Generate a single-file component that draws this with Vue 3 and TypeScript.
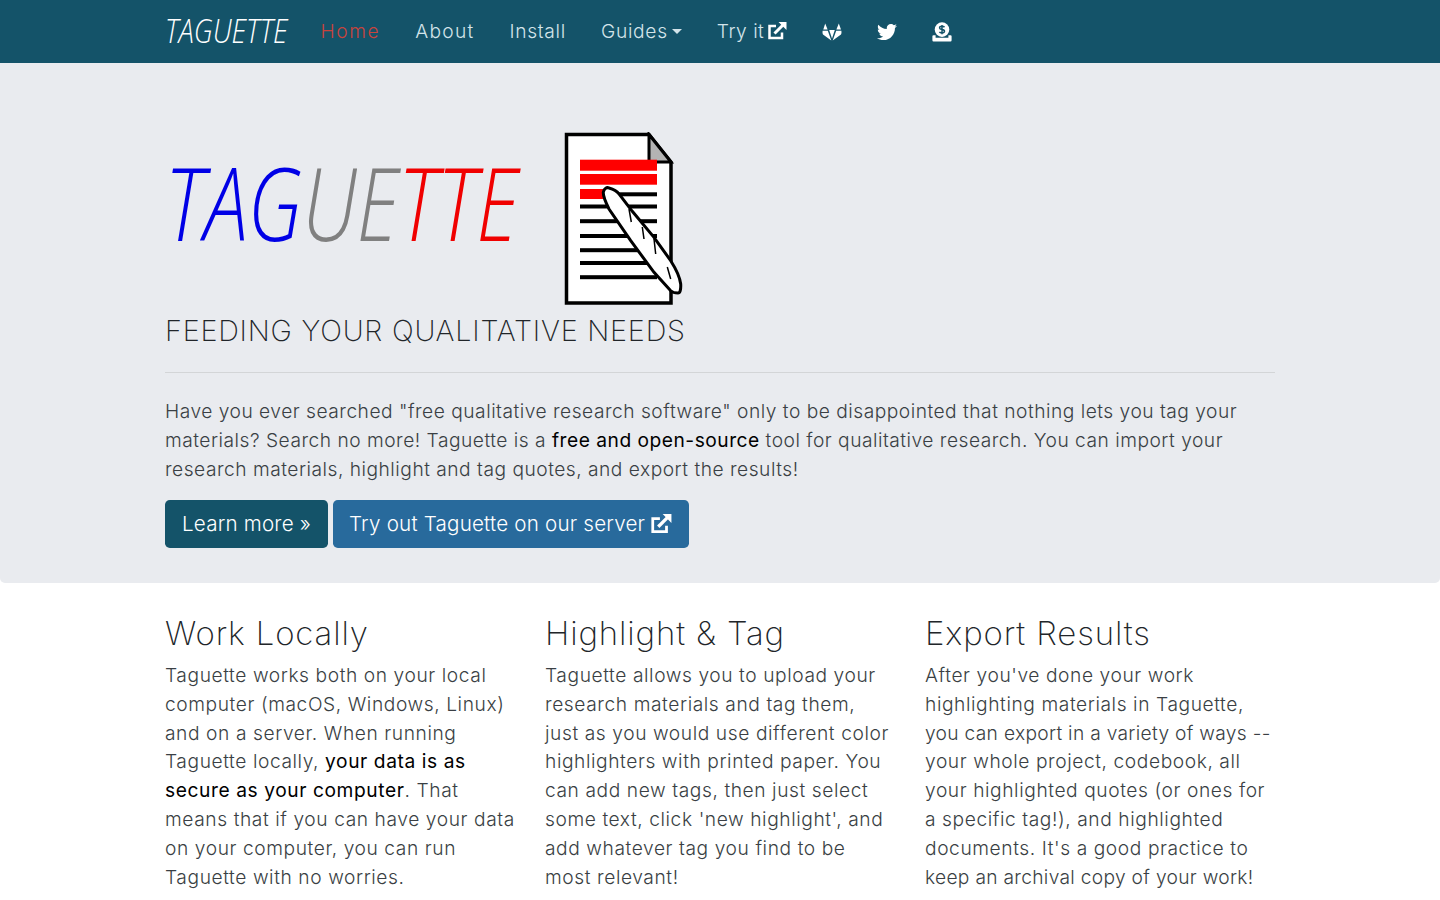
<script setup lang="ts">
interface Part {
  text: string;
  strong?: boolean;
  tight?: boolean;
}

interface Feature {
  title: string;
  lines: Part[][];
}

const features: Feature[] = [
  {
    title: "Work Locally",
    lines: [
      [{ text: "Taguette works both on your local" }],
      [{ text: "computer (macOS, Windows, Linux)" }],
      [{ text: "and on a server. When running" }],
      [{ text: "Taguette locally, " }, { text: "your data is as", strong: true }],
      [{ text: "secure as your computer", strong: true }, { text: ". That" }],
      [{ text: "means that if you can have your data" }],
      [{ text: "on your computer, you can run" }],
      [{ text: "Taguette with no worries." }],
    ],
  },
  {
    title: "Highlight & Tag",
    lines: [
      [{ text: "Taguette allows you to upload your" }],
      [{ text: "research materials and tag them," }],
      [{ text: "just as you would use different color" }],
      [{ text: "highlighters with printed paper. You" }],
      [{ text: "can add new tags, then just select" }],
      [{ text: "some text, click 'new highlight', and" }],
      [{ text: "add whatever tag you find to be" }],
      [{ text: "most relevant!" }],
    ],
  },
  {
    title: "Export Results",
    lines: [
      [{ text: "After you've done your work" }],
      [{ text: "highlighting materials in Taguette," }],
      [{ text: "you can export in a variety of ways --", tight: true }],
      [{ text: "your whole project, codebook, all" }],
      [{ text: "your highlighted quotes (or ones for" }],
      [{ text: "a specific tag!), and highlighted" }],
      [{ text: "documents. It's a good practice to" }],
      [{ text: "keep an archival copy of your work!", tight: true }],
    ],
  },
];

// y of the black text lines on the document icon
const docLines = [72.5, 87.2, 102, 116.2, 129, 143.2];
</script>

<template>
  <div class="page">
    <nav class="navbar">
      <div class="container nav-inner">
        <a class="brand"><span>TAGUETTE</span></a>
        <a class="nav-link active">Home</a>
        <a class="nav-link about">About</a>
        <a class="nav-link">Install</a>
        <a class="nav-link">Guides<i class="caret"></i></a>
        <a class="nav-link try-it">Try it
          <svg class="ext" viewBox="0 0 20 20">
            <path d="M15 11.5V17H2.500V5H9" fill="none" stroke="currentColor" stroke-width="2.500" />
            <path d="M7.500 12.500 16 4" fill="none" stroke="currentColor" stroke-width="3" />
            <path d="M11.500 1H19.500V9Z" fill="currentColor" />
          </svg>
        </a>
        <a class="nav-link">
          <svg viewBox="0 0 20 20" class="nav-icon">
            <path d="M3.200 1.500 5.600 7.500H1.300ZM16.800 1.500 19 7.500H14.400Z" fill="currentColor" />
            <path d="M.6 8.800H5.800L9.300 18.500 1 12.400Q.2 11.500.6 8.800ZM19.400 8.800H14.200L10.700 18.500 19 12.400Q19.800 11.500 19.400 8.800ZM7.200 8H12.800L10 16.500Z" fill="currentColor" />
          </svg>
        </a>
        <a class="nav-link">
          <svg viewBox="0 0 512 512" class="nav-icon">
            <path fill="currentColor" d="M459.37 151.716c.325 4.548.325 9.097.325 13.645 0 138.72-105.583 298.558-298.558 298.558-59.452 0-114.68-17.219-161.137-47.106 8.447.974 16.568 1.299 25.34 1.299 49.055 0 94.213-16.568 130.274-44.832-46.132-.975-84.792-31.188-98.112-72.772 6.498.974 12.995 1.624 19.818 1.624 9.421 0 18.843-1.3 27.614-3.573-48.081-9.747-84.143-51.98-84.143-102.985v-1.299c13.969 7.797 30.214 12.67 47.431 13.319-28.264-18.843-46.781-51.005-46.781-87.391 0-19.492 5.197-37.36 14.294-52.954 51.655 63.675 129.3 105.258 216.365 109.807-1.624-7.797-2.599-15.918-2.599-24.04 0-57.828 46.782-104.934 104.934-104.934 30.213 0 57.502 12.67 76.67 33.137 23.715-4.548 46.456-13.32 66.599-25.34-7.798 24.366-24.366 44.833-46.132 57.827 21.117-2.273 41.584-8.122 60.426-16.243-14.292 20.791-32.161 39.308-52.628 54.253z" />
          </svg>
        </a>
        <a class="nav-link">
          <svg viewBox="0 0 20 20" class="nav-icon">
            <circle cx="10" cy="7.600" r="7.300" fill="currentColor" />
            <path d="M12.500 5.200Q11.800 4.300 10 4.300 7.500 4.300 7.600 6 7.700 7.300 10 7.600 12.500 8 12.500 9.300 12.400 10.900 10 10.900 8 10.900 7.400 9.900M10 3V12.200" fill="none" stroke="#145369" stroke-width="1.500" />
            <path d="M1.500 13.200H3.600V15.800H16.400V13.200H18.500Q19.600 13.200 19.600 14.300V18.200Q19.600 19.400 18.500 19.400H1.500Q.4 19.400 .4 18.200V14.300Q.4 13.200 1.500 13.200Z" fill="currentColor" />
          </svg>
        </a>
      </div>
    </nav>

    <header class="jumbotron">
      <div class="container">
        <div class="logo-row">
          <div class="logo-text">
            <span class="blue">TAG</span><span class="gray">UE</span><span class="red">TTE</span>
          </div>
          <svg class="doc" viewBox="0 0 120 175">
            <path d="M2.500 2.500H85L107 30V171H2.500Z" fill="#fff" stroke="#000" stroke-width="3.500" />
            <path d="M85 2.500V30H107Z" fill="#b3b3b3" stroke="#000" stroke-width="3" />
            <rect x="16" y="27.700" width="77" height="11" fill="#f00" />
            <rect x="16" y="42" width="77" height="10.700" fill="#f00" />
            <rect x="16" y="57" width="30" height="10" fill="#f00" />
            <rect x="40" y="60.300" width="53" height="4" fill="#000" />
            <rect v-for="y in docLines" :key="y" x="16" :y="y" width="77" height="4" fill="#000" />
            <path d="M39.300 60.300C40 56 43 55 45 56 49 57 53 59 55 62L68.300 79.300 90 105.300 106.700 128.700C112 137 116 146 116.700 152 117 158 116 161 114 161 111 161 108.500 160.500 106.700 158.700L90 140.300 66.700 108.700 45 77C42 71 39 65 39.300 60.300Z" fill="#fff" stroke="#000" stroke-width="3" />
            <path d="M65 77 67.300 90M78.300 95 80 107M90 107 91.700 122M103.300 135 106.700 147" fill="none" stroke="#000" stroke-width="1.500" />
          </svg>
        </div>
        <h1 class="tagline">FEEDING YOUR QUALITATIVE NEEDS</h1>
        <hr class="divider" />
        <p class="intro">
          Have you ever searched "free qualitative research software" only to be disappointed that nothing lets you tag your<br />
          materials? Search no more! Taguette is a <strong>free and open-source</strong> tool for qualitative research. You can import your<br />
          research materials, highlight and tag quotes, and export the results!
        </p>
        <div class="actions">
          <a class="btn btn-primary">Learn more »</a>
          <a class="btn btn-secondary">Try out Taguette on our server
            <svg class="ext ext-lg" viewBox="0 0 20 20">
              <path d="M15 11.500V17H2.500V5H9" fill="none" stroke="currentColor" stroke-width="2.500" />
              <path d="M7.500 12.500 16 4" fill="none" stroke="currentColor" stroke-width="3" />
              <path d="M11.500 1H19.500V9Z" fill="currentColor" />
            </svg>
          </a>
        </div>
      </div>
    </header>

    <main class="container features">
      <section v-for="feature in features" :key="feature.title" class="feature">
        <h2>{{ feature.title }}</h2>
        <p>
          <span
            v-for="(line, i) in feature.lines"
            :key="i"
            class="line"
            :class="{ tight: line[0].tight }"
          >
            <template v-for="part in line" :key="part.text">
              <strong v-if="part.strong">{{ part.text }}</strong>
              <template v-else>{{ part.text }}</template>
            </template>
          </span>
        </p>
      </section>
    </main>
  </div>
</template>

<style>
html,
body {
  margin: 0;
  background: #fff;
  overflow: hidden;
}
</style>

<style scoped>
.page {
  font-family: Inter, "Liberation Sans", sans-serif;
  font-weight: 300;
  font-size: 19.2px;
  line-height: 28.8px;
  color: #3a3f44;
  letter-spacing: 0.5px;
  height: 900px;
  overflow: hidden;
}

.container {
  width: 1110px;
  margin: 0 auto;
}

.navbar {
  background: #145369;
  height: 63px;
}

.nav-inner {
  display: flex;
  align-items: center;
  height: 100%;
}

.brand {
  width: 138px;
  color: #fff;
  font-family: "Open Sans", sans-serif;
  font-size: 33px;
  font-style: italic;
  font-weight: 300;
  letter-spacing: 0;
  white-space: nowrap;
}

.brand span {
  display: inline-block;
  transform: scaleX(0.835);
  transform-origin: left center;
}

.nav-link {
  display: flex;
  align-items: center;
  gap: 5px;
  color: #d3e4ea;
  margin: 0 17.500px;
  letter-spacing: 0.7px;
  white-space: nowrap;
}

.nav-link.active {
  color: #c8433d;
  letter-spacing: 1.6px;
}

.nav-link.about {
  letter-spacing: 1.25px;
}

.nav-link.try-it {
  gap: 3px;
  letter-spacing: 0.5px;
}

.caret {
  width: 0;
  height: 0;
  margin-left: -1px;
  border-top: 5px solid currentColor;
  border-left: 5px solid transparent;
  border-right: 5px solid transparent;
}

.ext {
  width: 20px;
  height: 20px;
  color: #fff;
}

.ext-lg {
  width: 22px;
  height: 22px;
}

.nav-icon {
  width: 20px;
  height: 20px;
  color: #fff;
  display: block;
}

.jumbotron {
  background: #e9ebef;
  height: 520px;
  border-radius: 0 0 5px 5px;
  padding-top: 69px;
  box-sizing: border-box;
}

.logo-row {
  display: flex;
  align-items: flex-start;
  height: 182px;
}

.logo-text {
  width: 399px;
  margin-top: 10px;
  font-family: "Open Sans", sans-serif;
  font-size: 102px;
  line-height: 120px;
  font-style: italic;
  font-weight: 300;
  letter-spacing: 0;
  white-space: nowrap;
  transform: scaleX(0.778);
  transform-origin: left top;
}

.blue {
  color: #0000e6;
}

.gray {
  color: #808080;
}

.red {
  color: #f00000;
}

.doc {
  width: 120px;
  height: 175px;
  display: block;
  flex: none;
}

.tagline {
  margin: 0;
  font-size: 28.800px;
  line-height: 34px;
  font-weight: 250;
  letter-spacing: 0.78px;
  color: #212529;
}

.divider {
  margin: 24px 0 0;
  border: 0;
  border-top: 1px solid #d3d5d7;
}

.intro {
  margin: 24px 0 17px;
  white-space: nowrap;
}

strong {
  font-weight: 400;
  color: #000;
}

.actions {
  display: flex;
  gap: 5px;
}

.btn {
  display: flex;
  align-items: center;
  gap: 5px;
  height: 48px;
  padding: 0 17px;
  box-sizing: border-box;
  color: #fff;
  font-size: 20.600px;
  letter-spacing: 0.2px;
  border-radius: 4.800px;
}

.btn-primary {
  background: #145369;
}

.btn-secondary {
  background: #286a9c;
  padding-left: 16px;
}

.features {
  display: grid;
  grid-template-columns: repeat(3, 350px);
  column-gap: 30px;
  padding-top: 30px;
}

.feature h2 {
  margin: 0 0 8px;
  font-size: 33px;
  line-height: 40px;
  font-weight: 250;
  letter-spacing: 0.85px;
  color: #212529;
}

.feature p {
  margin: 0;
  letter-spacing: 0.58px;
}

.line {
  display: block;
  white-space: nowrap;
}

.line.tight {
  letter-spacing: 0.3px;
}
</style>
